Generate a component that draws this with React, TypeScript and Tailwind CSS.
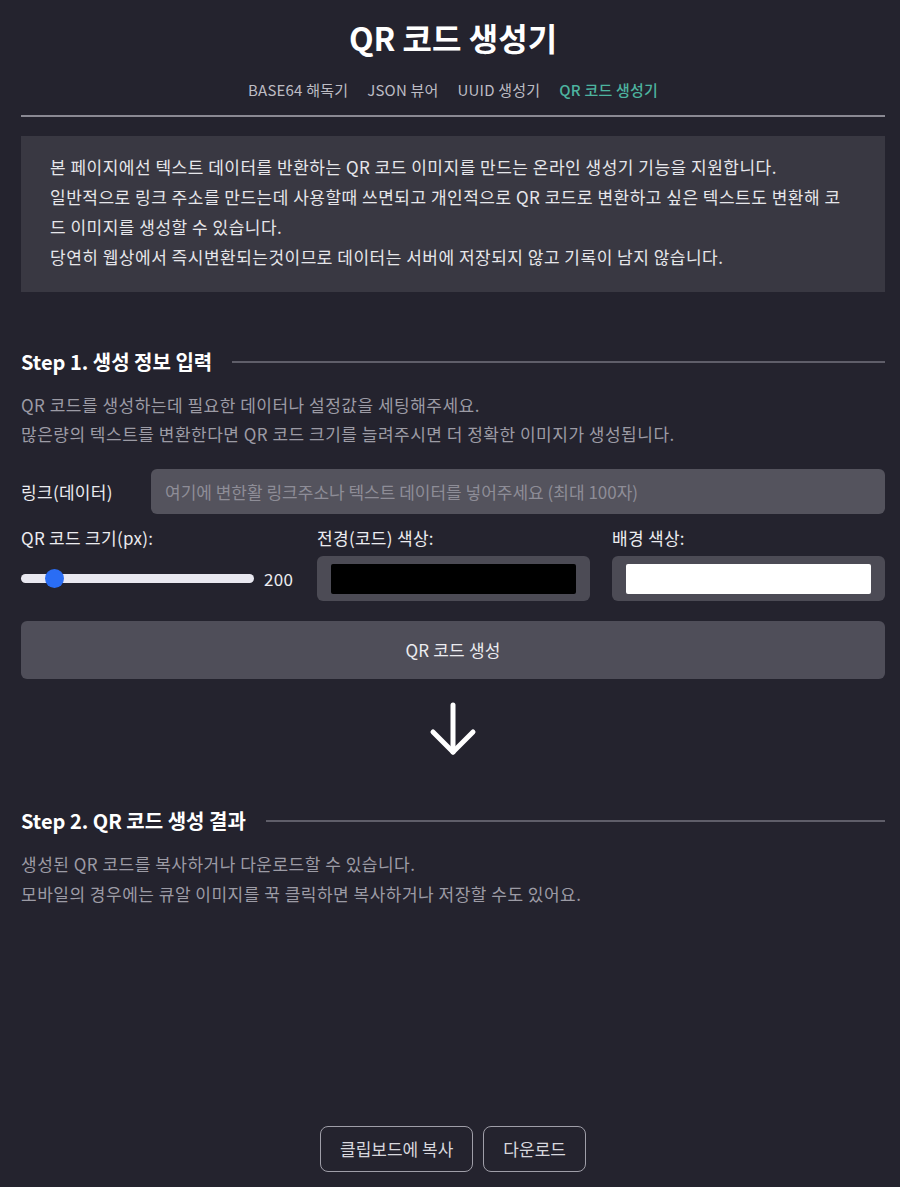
import { useState } from 'react';

const FONT = '"Noto Sans CJK KR", "Noto Sans", sans-serif';

const NAV_ITEMS = ['BASE64 해독기', 'JSON 뷰어', 'UUID 생성기', 'QR 코드 생성기'];

function StepHeading({ title }: { title: string }) {
  return (
    <div className="flex items-center gap-5">
      <h2 className="shrink-0 text-[20px] font-bold leading-[28px] text-white">{title}</h2>
      <div className="h-[2px] flex-1 bg-[#5f5e69]" />
    </div>
  );
}

function ColorField({ label, color }: { label: string; color: string }) {
  return (
    <div className="flex flex-1 flex-col">
      <label className="text-[17px] leading-[24px] tracking-[0.3px] text-[#ececf0]">{label}</label>
      <div className="mt-[6px] flex h-[45px] items-center rounded-[6px] bg-[#4c4b55] px-[14px]">
        <div className="h-[30px] w-full rounded-[2px]" style={{ backgroundColor: color }} />
      </div>
    </div>
  );
}

export default function App() {
  const [size, setSize] = useState(200);
  const [link, setLink] = useState('');

  return (
    <div className="min-h-[1187px] bg-[#24232e] pb-[15px] pl-[21px] pr-[15px]" style={{ fontFamily: FONT }}>
      {/* Header */}
      <h1 className="pt-[14px] text-center text-[32px] font-bold leading-[46px] text-white">QR 코드 생성기</h1>
      <nav className="mt-[18px] flex justify-center gap-[19px] text-[15px] leading-[24px] tracking-[0.2px]">
        {NAV_ITEMS.map((item, i) => (
          <a
            key={item}
            className={i === NAV_ITEMS.length - 1 ? 'font-medium text-[#4db39f]' : 'text-[#bdbcc4]'}
          >
            {item}
          </a>
        ))}
      </nav>
      <div className="mt-[13px] h-[2px] bg-[#8a8993]" />

      {/* Intro */}
      <div className="mt-[19px] bg-[#393842] px-[29px] pb-[20px] pt-[16px] text-[17px] leading-[30px] tracking-[0.5px] text-[#e6e6ea]">
        <p>본 페이지에선 텍스트 데이터를 반환하는 QR 코드 이미지를 만드는 온라인 생성기 기능을 지원합니다.</p>
        <p>
          일반적으로 링크 주소를 만드는데 사용할때 쓰면되고 개인적으로 QR 코드로 변환하고 싶은 텍스트도 변환해 코드
          이미지를 생성할 수 있습니다.
        </p>
        <p>당연히 웹상에서 즉시변환되는것이므로 데이터는 서버에 저장되지 않고 기록이 남지 않습니다.</p>
      </div>

      {/* Step 1 */}
      <section className="mt-[56px]">
        <StepHeading title="Step 1. 생성 정보 입력" />
        <div className="mt-[14px] text-[17px] leading-[29px] tracking-[0.5px] text-[#9c9ba5]">
          <p>QR 코드를 생성하는데 필요한 데이터나 설정값을 세팅해주세요.</p>
          <p>많은량의 텍스트를 변환한다면 QR 코드 크기를 늘려주시면 더 정확한 이미지가 생성됩니다.</p>
        </div>

        <div className="mt-[21px] flex items-center">
          <label className="w-[130px] shrink-0 text-[17px] tracking-[0.3px] text-[#ececf0]">링크(데이터)</label>
          <input
            value={link}
            onChange={(e) => setLink(e.target.value)}
            placeholder="여기에 변한활 링크주소나 텍스트 데이터를 넣어주세요 (최대 100자)"
            maxLength={100}
            className="h-[45px] flex-1 rounded-[6px] bg-[#54535d] px-[14px] text-[17px] text-white outline-none placeholder:text-[#8e8d97]"
          />
        </div>

        <div className="mt-[12px] flex gap-[22px]">
          <div className="flex w-[274px] shrink-0 flex-col">
            <label className="text-[17px] leading-[24px] tracking-[0.3px] text-[#ececf0]">QR 코드 크기(px):</label>
            <div className="mt-[6px] flex h-[45px] items-center gap-[10px]">
              <input
                type="range"
                min={100}
                max={1000}
                step={10}
                value={size}
                onChange={(e) => setSize(Number(e.target.value))}
                className="h-[9px] w-[233px] cursor-pointer appearance-none rounded-full bg-[#e9e8f0] [&::-webkit-slider-thumb]:h-[19px] [&::-webkit-slider-thumb]:w-[19px] [&::-webkit-slider-thumb]:appearance-none [&::-webkit-slider-thumb]:rounded-full [&::-webkit-slider-thumb]:bg-[#2a6df4]"
              />
              <span className="text-[17px] tracking-[0.3px] text-[#ececf0]">{size}</span>
            </div>
          </div>
          <ColorField label="전경(코드) 색상:" color="#000000" />
          <ColorField label="배경 색상:" color="#ffffff" />
        </div>

        <button className="mt-[20px] h-[58px] w-full rounded-[6px] bg-[#4f4e59] text-[17px] tracking-[0.2px] text-[#ececf0]">
          QR 코드 생성
        </button>
      </section>

      {/* Arrow */}
      <div className="mt-[22px] flex justify-center">
        <svg width="52" height="56" viewBox="0 0 52 56" fill="none" stroke="white" strokeWidth="5" strokeLinecap="round" strokeLinejoin="round">
          <path d="M26 4 V51" />
          <path d="M6 31 L26 51 L46 31" />
        </svg>
      </div>

      {/* Step 2 */}
      <section className="mt-[50px]">
        <StepHeading title="Step 2. QR 코드 생성 결과" />
        <div className="mt-[14px] text-[17px] leading-[30px] tracking-[0.5px] text-[#9c9ba5]">
          <p>생성된 QR 코드를 복사하거나 다운로드할 수 있습니다.</p>
          <p>모바일의 경우에는 큐알 이미지를 꾹 클릭하면 복사하거나 저장할 수도 있어요.</p>
        </div>

        <div className="h-[217px]" />

        <div className="flex justify-center gap-[10px]">
          <button className="h-[46px] rounded-[8px] border border-[#9f9ea8] px-[19px] text-[17px] text-[#d8d8de]">
            클립보드에 복사
          </button>
          <button className="h-[46px] rounded-[8px] border border-[#9f9ea8] px-[19px] text-[17px] text-[#d8d8de]">
            다운로드
          </button>
        </div>
      </section>
    </div>
  );
}
